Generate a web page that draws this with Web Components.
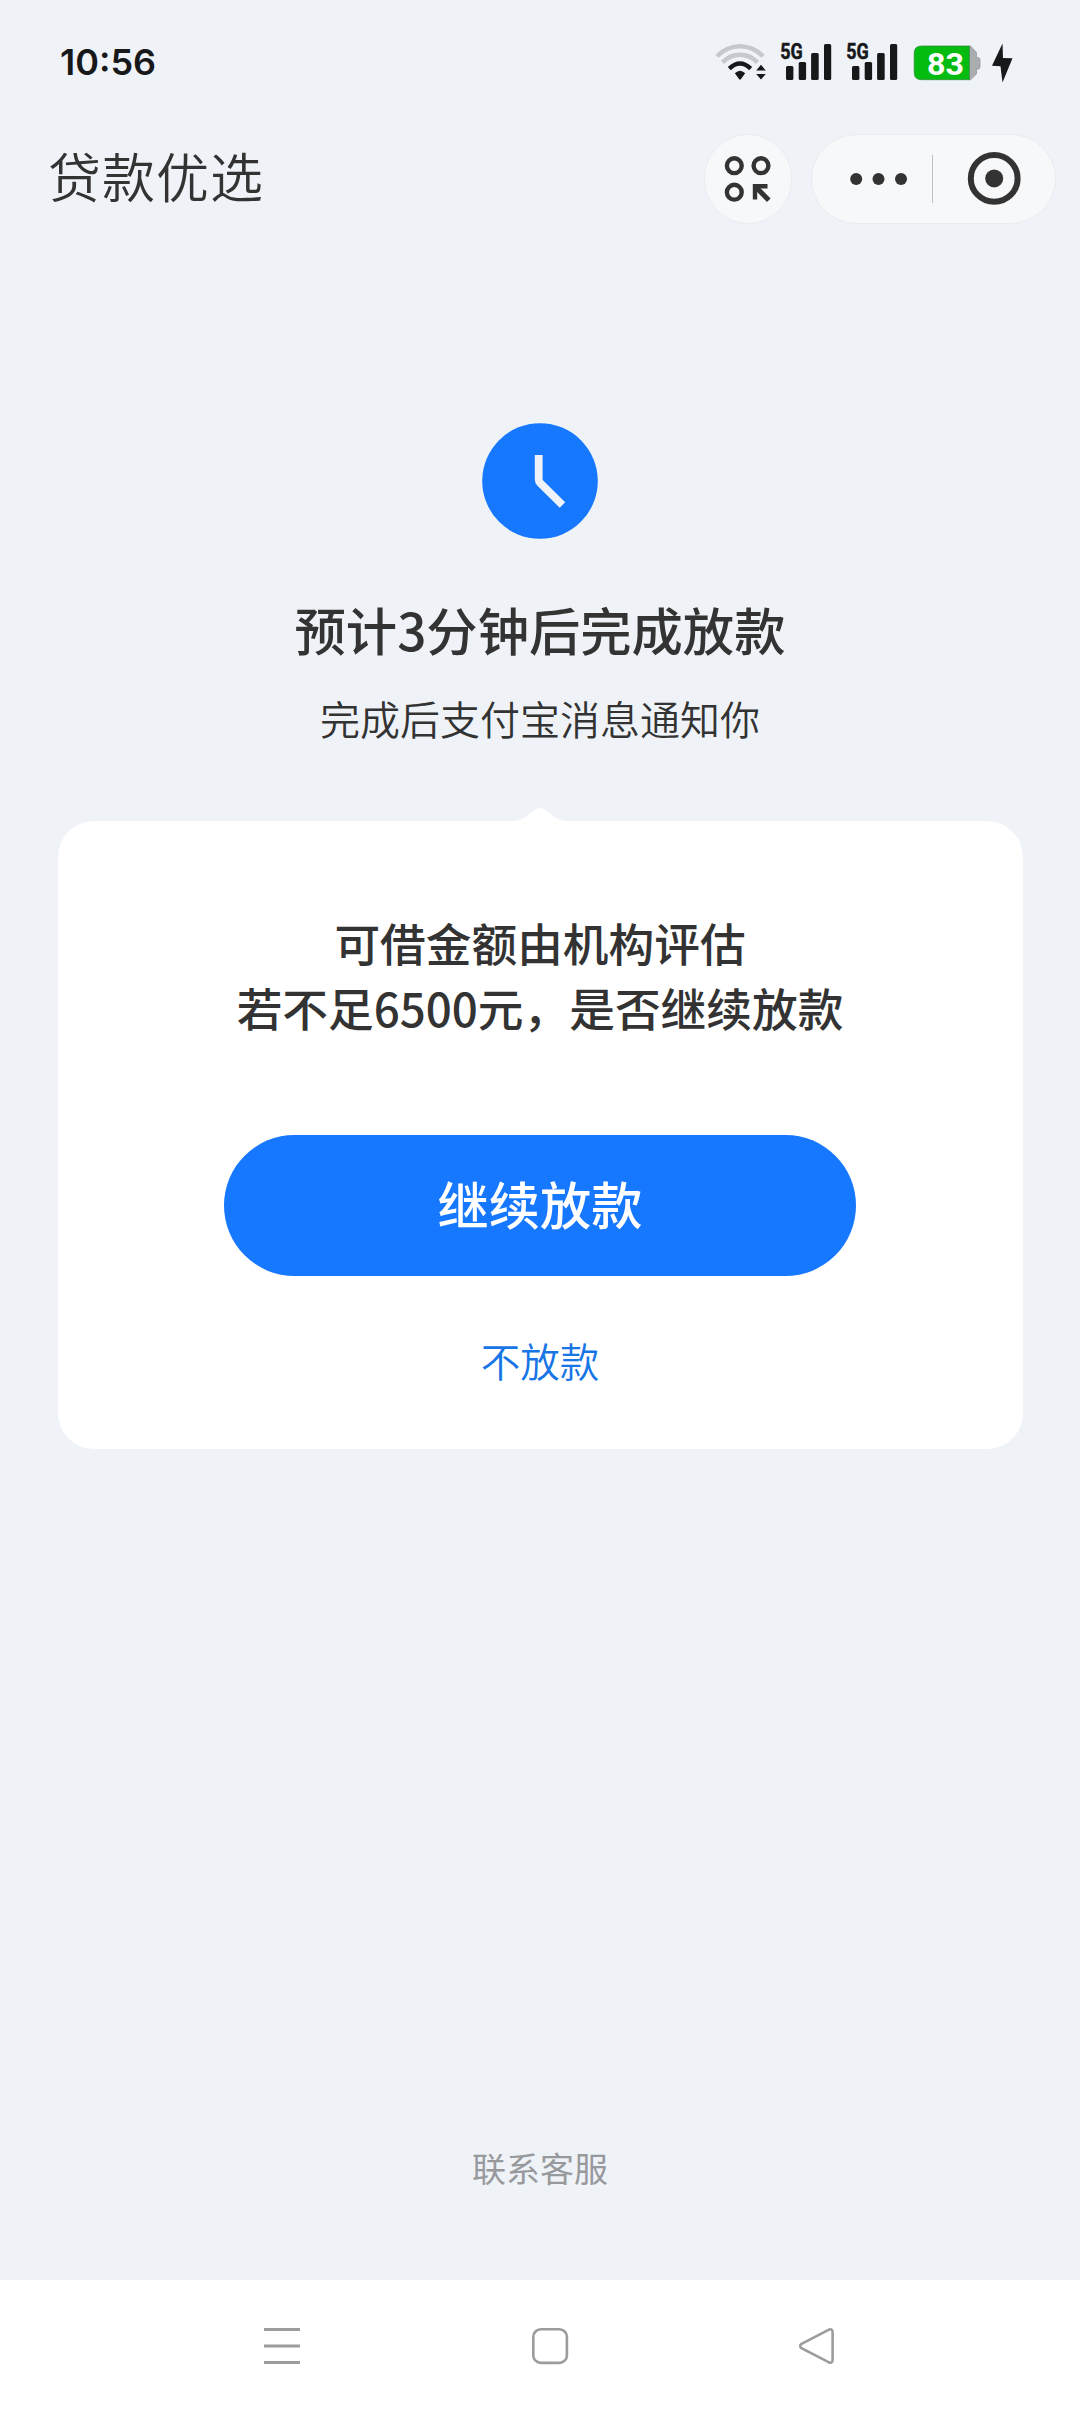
<!DOCTYPE html>
<html lang="zh-CN">
<head>
<meta charset="utf-8">
<title>贷款优选</title>
<style>
body{margin:0;background:#eff3f8;font-family:"Noto Sans CJK SC","Noto Sans",sans-serif;color:#333}
</style>
</head>
<body>
<loan-app></loan-app>
<script>
function define(name, html){
  const tpl = document.createElement('template');
  tpl.innerHTML = html;
  customElements.define(name, class extends HTMLElement{
    constructor(){
      super();
      this.attachShadow({mode:'open'}).appendChild(tpl.content.cloneNode(true));
    }
  });
}

define('signal-icon', `
<style>:host{display:block;width:52px;height:50px}svg{display:block;overflow:visible}</style>
<svg width="52" height="50" viewBox="780 38 52 50" fill="#17181a">
  <text x="780.300" y="59.300" font-family="Roboto" font-weight="700" font-size="22" textLength="22.500" lengthAdjust="spacingAndGlyphs" stroke="#17181a" stroke-width=".5">5G</text>
  <rect x="786" y="66" width="7.400" height="14" rx="1.500"/>
  <rect x="798.700" y="62" width="7.400" height="18" rx="1.500"/>
  <rect x="811.100" y="53" width="7.600" height="27" rx="1.500"/>
  <rect x="824" y="44" width="7.200" height="36" rx="1.500"/>
</svg>`);

define('wifi-icon', `
<style>:host{display:block;width:54px;height:42px}svg{display:block}</style>
<svg width="54" height="42" viewBox="714 42 54 42" fill="none">
  <path d="M717 56.200Q727 46.200 740 46.200T763 56.200" stroke="#c6c8cb" stroke-width="4.400"/>
  <path d="M722.600 62.400Q730 54.800 740 54.800T757.400 62.400" stroke="#c6c8cb" stroke-width="4.400"/>
  <path d="M729.300 68.600Q740 58.400 750.700 68.600" stroke="#17181a" stroke-width="4.400"/>
  <path d="M734.800 73.200Q740 68.200 745.200 73.200L740.800 79.300Q740 80 739.200 79.300Z" fill="#17181a"/>
  <path d="M756.200 70.500L761 64.800L765.800 70.500ZM756.200 74L761 79.500L765.800 74Z" fill="#17181a"/>
</svg>`);

define('battery-icon', `
<style>:host{display:block;width:68px;height:42px}svg{display:block}</style>
<svg width="68" height="42" viewBox="913 42 68 42">
  <path d="M969 46h1.500l6 6.500v5h1.300q2.200 0 2.200 2.200v7.300q0 2.200-2.200 2.200h-1.300v4.800l-6 5.800h-1.500z" fill="#a9adb0" stroke="#8c9093" stroke-width=".7"/>
  <path d="M921.500 46H969.300V79.700H921.500Q914.200 79.700 914.200 72.500V53.200Q914.200 46 921.500 46Z" fill="#04bb10" stroke="#2d8a34" stroke-width=".7"/>
  <text x="927" y="74.600" font-family="Roboto" font-weight="700" font-size="31.500" fill="#fff" textLength="37" lengthAdjust="spacingAndGlyphs">83</text>
</svg>`);

define('bolt-icon', `
<style>:host{display:block;width:22px;height:42px}svg{display:block}</style>
<svg width="22" height="42" viewBox="991 42 22 42"><path d="M1002.500 43.500L992 65.800L1000.500 66.200L1002.500 82.500L1012.500 58.300L1003 58Z" fill="#17181a"/></svg>`);

define('status-bar', `
<style>
:host{display:flex;align-items:center;justify-content:space-between;height:126px;padding:0 67px 0 60px;box-sizing:border-box;flex:none}
time{font:600 36px/40px Inter,sans-serif;color:#17181a;margin-bottom:3px}
.icons{display:flex;align-items:center}
signal-icon{margin-left:12px}
signal-icon + signal-icon{margin-left:14px}
battery-icon{margin-left:15px}
bolt-icon{margin-left:10px}
</style>
<time>10:56</time>
<div class="icons"><wifi-icon></wifi-icon><signal-icon></signal-icon><signal-icon></signal-icon><battery-icon></battery-icon><bolt-icon></bolt-icon></div>`);

define('title-bar', `
<style>
:host{display:flex;align-items:center;height:105px;padding:0 24px 0 48px;box-sizing:border-box;flex:none}
h1{font-size:53px;font-weight:350;line-height:80px;letter-spacing:1px;margin:0 auto 7px 0;color:#333}
.round,.pill{background:#f7f8fa;border:1px solid #e9ebf0;box-sizing:border-box;height:90px;display:flex}
.round{width:88px;border-radius:45px;margin-right:19px}
.pill{width:245px;border-radius:45px}
svg{display:block;margin:-1px}
</style>
<h1><slot></slot></h1>
<div class="round"><svg width="88" height="90" viewBox="704 134 88 90" fill="none" stroke="#333" stroke-width="4.400">
  <circle cx="734.300" cy="165.700" r="7.400"/><circle cx="761" cy="165.700" r="7.400"/><circle cx="734.300" cy="192.200" r="7.400"/>
  <path d="M755 199.500V186.300H767.500"/><path d="M755.500 186.800L768.800 200.200" stroke-width="5"/>
</svg></div>
<div class="pill"><svg width="245" height="90" viewBox="811 134 245 90" fill="#333">
  <circle cx="856.200" cy="179" r="6"/><circle cx="878.500" cy="179" r="6"/><circle cx="901" cy="179" r="6"/>
  <path d="M932.500 155V203" stroke="#bfc0c2" stroke-width="1"/>
  <circle cx="994.200" cy="178.400" r="23.400" fill="none" stroke="#333" stroke-width="6"/><circle cx="994.200" cy="178.400" r="9"/>
</svg></div>`);

define('loan-status', `
<style>
:host{display:flex;flex-direction:column;align-items:center;padding-top:192px;flex:none}
svg{display:block}
h2{margin:54px 0 0;font-size:51.300px;font-weight:500;line-height:72px}
p{margin:25px 0 0;font-size:40px;font-weight:350;line-height:56px}
</style>
<svg width="116" height="116" viewBox="0 0 116 116"><circle cx="58" cy="58" r="57.800" fill="#1677ff"/><path d="M56.700 32V56.500Q56.700 58.600 58.200 60.100L80.500 82" fill="none" stroke="#eff3f9" stroke-width="7.800"/></svg>
<h2><slot name="title"></slot></h2>
<p><slot name="detail"></slot></p>`);

define('confirm-card', `
<style>
:host{display:flex;flex-direction:column;align-items:center;position:relative;margin:75px 57.500px 0;height:628px;box-sizing:border-box;padding-top:89px;background:#fff;border-radius:36px;flex:none}
.tip{position:absolute;left:50%;top:-13px;margin-left:-29px;display:block}
.msg{font-size:45.700px;font-weight:500;line-height:65.300px;text-align:center;white-space:nowrap}
button{font:inherit;border:0;padding:0;cursor:pointer}
.yes{margin-top:94.500px;width:632px;height:141px;border-radius:71px;background:#1677ff;color:#fff;font-size:51.200px;font-weight:500;line-height:136px;padding-bottom:5px}
.no{margin-top:56px;background:none;color:#1775e6;font-size:39.500px;line-height:56px;font-weight:350}
</style>
<svg class="tip" width="58" height="14" viewBox="0 0 58 14"><path d="M0 14V13.500C12 12.500 16 8 22 3Q29 -3 36 3C42 8 46 12.500 58 13.500V14Z" fill="#fff"/></svg>
<div class="msg"><slot></slot></div>
<button class="yes">继续放款</button>
<button class="no">不放款</button>`);

define('nav-bar', `
<style>
:host{display:flex;height:132px;background:#fff;flex:none;align-items:center;justify-content:space-between;padding:0 243px 0 262px}
svg{display:block}
</style>
<svg width="40" height="40" viewBox="0 0 40 40" stroke="#9c9c9c" stroke-width="3"><path d="M2 3.500H38M2 20H38M2 36.500H38"/></svg>
<svg width="40" height="40" viewBox="0 0 40 40" fill="none" stroke="#9c9c9c" stroke-width="2.600"><rect x="3.300" y="3.300" width="33.600" height="33.600" rx="7.500"/></svg>
<svg width="40" height="40" viewBox="0 0 40 40" fill="none" stroke="#9c9c9c" stroke-width="2.600"><path d="M4.500 17.800L31.500 3.800Q35.600 2 35.600 6.500V33.500Q35.600 38 31.500 36.200L4.500 22.200Q1.900 20 4.500 17.800Z"/></svg>`);

define('loan-app', `
<style>
:host{display:flex;flex-direction:column;height:2412px;width:1080px}
.help{margin:auto 0 88px;text-align:center;font-size:34px;line-height:48px;color:#98999d}
</style>
<status-bar></status-bar>
<title-bar>贷款优选</title-bar>
<loan-status><span slot="title">预计3分钟后完成放款</span><span slot="detail">完成后支付宝消息通知你</span></loan-status>
<confirm-card>可借金额由机构评估<br>若不足6500元，是否继续放款</confirm-card>
<div class="help">联系客服</div>
<nav-bar></nav-bar>`);
</script>
</body>
</html>
